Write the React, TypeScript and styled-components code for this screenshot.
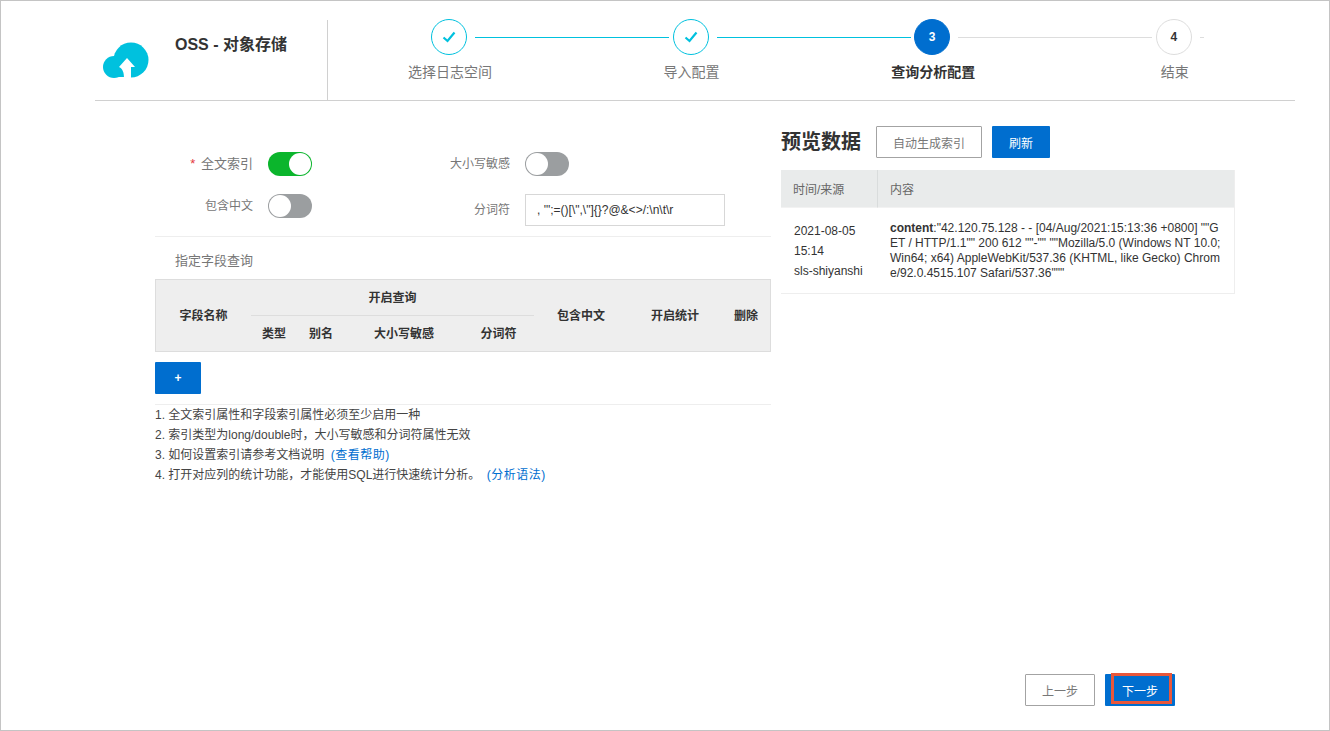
import React from 'react';
import styled, { createGlobalStyle } from 'styled-components';

const GlobalStyle = createGlobalStyle`
  html, body {
    margin: 0;
    padding: 0;
    background: #fff;
  }
  body {
    font-family: "Liberation Sans", "Noto Sans CJK SC", sans-serif;
    font-size: 12px;
    color: #333;
  }
  * {
    box-sizing: border-box;
  }
`;

const steps = [
  { label: '选择日志空间', state: 'done' },
  { label: '导入配置', state: 'done' },
  { label: '查询分析配置', state: 'active' },
  { label: '结束', state: 'todo' },
] as const;

const logText =
  '"42.120.75.128 - - [04/Aug/2021:15:13:36 +0800] ""GET / HTTP/1.1"" 200 612 ""-"" ""Mozilla/5.0 (Windows NT 10.0; Win64; x64) AppleWebKit/537.36 (KHTML, like Gecko) Chrome/92.0.4515.107 Safari/537.36"""';

function CloudLogo() {
  return (
    <svg width="46" height="37" viewBox="0 0 46 37">
      <circle cx="28" cy="18" r="17.5" fill="#00c1de" />
      <circle cx="11" cy="25" r="11" fill="#00c1de" />
      <rect x="11" y="25" width="20" height="10" fill="#00c1de" />
      <path d="M24 16 L32 25 L28 25 L28 36 L21 36 C21 31 20 27 16 25 Z" fill="#fff" />
    </svg>
  );
}

function Check() {
  return (
    <svg width="14" height="12" viewBox="0 0 14 12">
      <path d="M1.5 6.5 L5.5 10 L12.5 1.5" fill="none" stroke="#00c1de" strokeWidth="2.2" />
    </svg>
  );
}

export default function App() {
  return (
    <>
      <GlobalStyle />
      <Frame>
        <Header>
          <Brand>
            <LogoSlot>
              <CloudLogo />
            </LogoSlot>
            <BrandTitle>OSS - 对象存储</BrandTitle>
          </Brand>
          <Steps>
            {steps.map((step, i) => (
              <Step key={step.label}>
                <StepTrack>
                  <StepCircle $state={step.state}>
                    {step.state === 'done' ? <Check /> : i + 1}
                  </StepCircle>
                  <StepLine $done={step.state === 'done'} $last={i === steps.length - 1} />
                </StepTrack>
                <StepLabel $active={step.state === 'active'}>{step.label}</StepLabel>
              </Step>
            ))}
          </Steps>
        </Header>

        <Body>
          <LeftColumn>
            <FormGrid>
              <FieldLabel $large>
                <Required>*</Required> 全文索引
              </FieldLabel>
              <Toggle $on>
                <Knob />
              </Toggle>
              <FieldLabel>大小写敏感</FieldLabel>
              <Toggle>
                <Knob />
              </Toggle>
              <FieldLabel>包含中文</FieldLabel>
              <Toggle>
                <Knob />
              </Toggle>
              <FieldLabel $tall>分词符</FieldLabel>
              <TokenInput readOnly value={', \'";=()[\\",\\"]{}?@&<>/:\\n\\t\\r'} />
            </FormGrid>
            <SectionTitle>指定字段查询</SectionTitle>
            <FieldTable>
              <HeadCell $span>字段名称</HeadCell>
              <GroupCell>开启查询</GroupCell>
              <HeadCell $span>包含中文</HeadCell>
              <HeadCell $span>开启统计</HeadCell>
              <HeadCell $span>删除</HeadCell>
              <HeadCell>类型</HeadCell>
              <HeadCell>别名</HeadCell>
              <HeadCell>大小写敏感</HeadCell>
              <HeadCell>分词符</HeadCell>
            </FieldTable>
            <AddButton>+</AddButton>
            <Notes>
              <li>1. 全文索引属性和字段索引属性必须至少启用一种</li>
              <li>2. 索引类型为long/double时，大小写敏感和分词符属性无效</li>
              <li>
                3. 如何设置索引请参考文档说明 <HelpLink>(查看帮助)</HelpLink>
              </li>
              <li>
                4. 打开对应列的统计功能，才能使用SQL进行快速统计分析。 <HelpLink>(分析语法)</HelpLink>
              </li>
            </Notes>
          </LeftColumn>

          <RightColumn>
            <PreviewBar>
              <PreviewTitle>预览数据</PreviewTitle>
              <OutlineButton $width={106}>自动生成索引</OutlineButton>
              <PrimaryButton $width={58}>刷新</PrimaryButton>
            </PreviewBar>
            <PreviewTable>
              <PreviewHead>时间/来源</PreviewHead>
              <PreviewHead>内容</PreviewHead>
              <SourceCell>
                <div>2021-08-05</div>
                <div>15:14</div>
                <div>sls-shiyanshi</div>
              </SourceCell>
              <ContentCell>
                <strong>content</strong>:{logText}
              </ContentCell>
            </PreviewTable>
          </RightColumn>
        </Body>

        <Footer>
          <OutlineButton $width={70}>上一步</OutlineButton>
          <NextWrap>
            <PrimaryButton $width={70}>下一步</PrimaryButton>
            <Highlight />
          </NextWrap>
        </Footer>
      </Frame>
    </>
  );
}

const Frame = styled.div`
  width: 1330px;
  height: 731px;
  border: 1px solid #c4c4c4;
  display: flex;
  flex-direction: column;
  overflow: hidden;
`;

const Header = styled.header`
  width: 1200px;
  height: 100px;
  margin-left: 94px;
  padding-top: 19px;
  border-bottom: 1px solid #d0d0d0;
  display: flex;
  flex: none;
`;

const Brand = styled.div`
  width: 233px;
  height: 80px;
  flex: none;
  border-right: 1px solid #d0d0d0;
  display: flex;
  align-items: flex-start;
`;

const LogoSlot = styled.div`
  width: 80px;
  flex: none;
  padding: 22px 0 0 8px;
`;

const BrandTitle = styled.h1`
  margin: 15px 0 0;
  font-size: 16px;
  line-height: 20px;
  font-weight: 700;
  color: #333;
  white-space: nowrap;
`;

const Steps = styled.div`
  display: grid;
  grid-template-columns: repeat(3, 241.6px) 120px;
  padding-left: 103px;
  margin-top: -1px;
  flex: none;
`;

const Step = styled.div`
  min-width: 0;
`;

const StepTrack = styled.div`
  display: flex;
  align-items: center;
  height: 36px;
`;

const StepCircle = styled.div<{ $state: 'done' | 'active' | 'todo' }>`
  width: 36px;
  height: 36px;
  flex: none;
  border-radius: 50%;
  display: flex;
  align-items: center;
  justify-content: center;
  font-size: 12px;
  font-weight: 700;
  border: 1px solid
    ${(p) => (p.$state === 'done' ? '#00c1de' : p.$state === 'active' ? '#006ecf' : '#dddddd')};
  background: ${(p) => (p.$state === 'active' ? '#006ecf' : '#fff')};
  color: ${(p) => (p.$state === 'active' ? '#fff' : '#333')};
`;

const StepLine = styled.div<{ $done: boolean; $last: boolean }>`
  height: 1px;
  flex: none;
  margin-left: 8px;
  width: ${(p) => (p.$last ? '4px' : '194px')};
  background: ${(p) => (p.$done ? '#00c1de' : '#dddddd')};
`;

const StepLabel = styled.div<{ $active: boolean }>`
  width: 120px;
  margin: 7px 0 0 -41px;
  text-align: center;
  font-size: 14px;
  line-height: 20px;
  font-weight: ${(p) => (p.$active ? 700 : 400)};
  color: ${(p) => (p.$active ? '#333' : '#777')};
`;

const Body = styled.main`
  display: flex;
  gap: 10px;
  padding: 25px 0 0 154px;
  flex: 1;
`;

const LeftColumn = styled.section`
  width: 616px;
  padding-top: 26px;
`;

const FormGrid = styled.div`
  display: grid;
  grid-template-columns: 113px 100px 157px 200px;
  grid-auto-rows: min-content;
  row-gap: 18px;
  padding-bottom: 10px;
  border-bottom: 1px solid #eeeeee;
  align-items: start;
`;

const FieldLabel = styled.label<{ $tall?: boolean; $large?: boolean }>`
  text-align: right;
  padding-right: 15px;
  font-size: ${(p) => (p.$large ? '13px' : '12px')};
  line-height: ${(p) => (p.$tall ? '32px' : '24px')};
  color: #777;
`;

const Required = styled.span`
  color: #e4393c;
  margin-right: 2px;
`;

const Toggle = styled.div<{ $on?: boolean }>`
  width: 44px;
  height: 24px;
  border-radius: 12px;
  padding: 1px;
  display: flex;
  justify-content: ${(p) => (p.$on ? 'flex-end' : 'flex-start')};
  background: ${(p) => (p.$on ? '#0bb52c' : '#9b9ea0')};
`;

const Knob = styled.span`
  width: 22px;
  height: 22px;
  border-radius: 50%;
  background: #fff;
`;

const TokenInput = styled.input`
  width: 200px;
  height: 32px;
  padding: 0 11px;
  border: 1px solid #d7d7d7;
  outline: none;
  font-family: inherit;
  font-size: 12px;
  color: #333;
`;

const SectionTitle = styled.h2`
  margin: 14px 0 8px;
  padding-left: 20px;
  font-size: 13px;
  line-height: 20px;
  font-weight: 400;
  color: #777;
`;

const FieldTable = styled.div`
  display: grid;
  grid-template-columns: 95px 46px 48px 118px 71px 94px 94px 48px;
  grid-template-rows: 36px 35px;
  height: 73px;
  border: 1px solid #dddddd;
  background: #eeeeee;
`;

const HeadCell = styled.div<{ $span?: boolean }>`
  display: flex;
  align-items: center;
  justify-content: center;
  padding-bottom: 3px;
  font-size: 12px;
  font-weight: 700;
  color: #333;
  ${(p) => p.$span && 'grid-row: span 2;'}
`;

const GroupCell = styled(HeadCell)`
  grid-column: span 4;
  border-bottom: 1px solid #dddddd;
`;

const AddButton = styled.button`
  display: block;
  width: 46px;
  height: 32px;
  margin: 10px 0;
  padding: 0;
  border: none;
  border-radius: 1px;
  background: #006ecf;
  color: #fff;
  font-family: inherit;
  font-size: 12px;
  font-weight: 700;
`;

const Notes = styled.ul`
  list-style: none;
  margin: 0;
  padding: 0;
  border-top: 1px solid #eeeeee;
  font-size: 12px;
  line-height: 20px;
  color: #444;
`;

const HelpLink = styled.a`
  color: #006ecf;
  margin-left: 3px;
  letter-spacing: 0.5px;
`;

const RightColumn = styled.section`
  width: 454px;
`;

const PreviewBar = styled.div`
  display: flex;
  align-items: center;
  gap: 10px;
  height: 32px;
  margin-bottom: 12px;
`;

const PreviewTitle = styled.h2`
  margin: 0 5px 0 0;
  font-size: 20px;
  line-height: 28px;
  font-weight: 700;
  color: #333;
`;

const OutlineButton = styled.button<{ $width: number }>`
  width: ${(p) => p.$width}px;
  height: 32px;
  padding: 0;
  background: #fff;
  border: 1px solid #a3a3a3;
  border-radius: 1px;
  font-family: inherit;
  font-size: 12px;
  color: #777;
`;

const PrimaryButton = styled.button<{ $width: number }>`
  width: ${(p) => p.$width}px;
  height: 32px;
  padding: 0;
  background: #006ecf;
  border: none;
  border-radius: 1px;
  font-family: inherit;
  font-size: 12px;
  color: #fff;
`;

const PreviewTable = styled.div`
  display: grid;
  grid-template-columns: 96px 1fr;
  grid-template-rows: 38px 85px;
  border-right: 1px solid #eeeeee;
  border-bottom: 1px solid #eeeeee;
`;

const PreviewHead = styled.div`
  display: flex;
  align-items: center;
  padding-left: 12px;
  background: #e9ebeb;
  border-bottom: 1px solid #f2f2f2;
  font-size: 12px;
  color: #666;
  & + & {
    border-left: 1px solid #d9dcdc;
  }
`;

const SourceCell = styled.div`
  padding: 13px 0 0 13px;
  font-size: 12px;
  line-height: 20px;
  color: #333;
`;

const ContentCell = styled.div`
  padding: 13px 12px 0 13px;
  font-size: 12px;
  line-height: 15px;
  color: #333;
  word-break: break-all;
`;

const Footer = styled.footer`
  display: flex;
  justify-content: flex-end;
  gap: 10px;
  padding: 0 154px 24px 0;
  flex: none;
`;

const NextWrap = styled.div`
  position: relative;
  height: 32px;
`;

const Highlight = styled.span`
  position: absolute;
  left: 6px;
  top: -1px;
  width: 61px;
  height: 31px;
  border: 3px solid #e9573a;
  pointer-events: none;
`;
